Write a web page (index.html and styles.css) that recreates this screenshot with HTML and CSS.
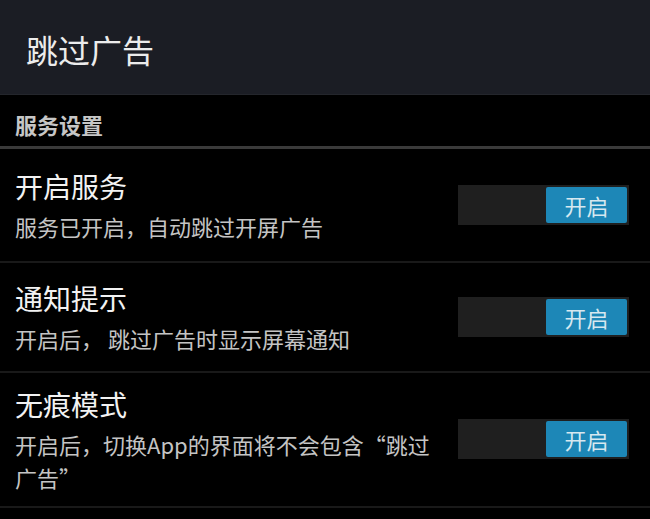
FILE: index.html
```html
<!DOCTYPE html>
<html lang="zh-CN">
<head>
    <meta charset="UTF-8">
    <meta name="viewport" content="width=device-width, initial-scale=1.0">
    <title>跳过广告</title>
    <link rel="stylesheet" href="styles.css">
</head>
<body>
    <div class="app">
        <div class="toolbar">
            <h1 class="toolbar-title">跳过广告</h1>
        </div>

        <div class="section-title">服务设置</div>

        <div class="pref-row pref-row-first">
            <div class="pref-text">
                <div class="pref-title">开启服务</div>
                <div class="pref-summary">服务已开启，自动跳过开屏广告</div>
            </div>
            <div class="switch">
                <span class="switch-thumb">开启</span>
            </div>
        </div>

        <div class="pref-row">
            <div class="pref-text">
                <div class="pref-title">通知提示</div>
                <div class="pref-summary">开启后， 跳过广告时显示屏幕通知</div>
            </div>
            <div class="switch">
                <span class="switch-thumb">开启</span>
            </div>
        </div>

        <div class="pref-row">
            <div class="pref-text">
                <div class="pref-title">无痕模式</div>
                <div class="pref-summary">开启后，切换App的界面将不会包含“跳过广告”</div>
            </div>
            <div class="switch">
                <span class="switch-thumb">开启</span>
            </div>
        </div>
    </div>
</body>
</html>
```

FILE: styles.css
```css
body {
    margin: 0;
    background-color: #000;
    font-family: "Noto Sans CJK SC", "Noto Sans", sans-serif;
    color: #eee;
}

.app {
    width: 650px;
    min-height: 519px;
    background-color: #000;
}

.toolbar {
    height: 95px;
    background-color: #1b1d24;
    border-bottom: 1px solid #24262c;
    display: flex;
    align-items: center;
    padding-left: 26px;
    box-sizing: border-box;
}

.toolbar-title {
    margin: 0;
    font-size: 32px;
    font-weight: normal;
    color: #ececec;
    line-height: 40px;
    padding-top: 4px;
}

.section-title {
    padding: 12px 15px 5px;
    font-size: 22px;
    line-height: 34px;
    font-weight: bold;
    color: #c6c6c6;
    border-bottom: 3px solid #3a3a3a;
}

.pref-row {
    display: flex;
    align-items: center;
    min-height: 110px;
    padding: 14px 21px 12px 15px;
    box-sizing: border-box;
    border-bottom: 2px solid #191919;
}

.pref-row-first {
    min-height: 114px;
}

.pref-text {
    flex: 1;
}

.pref-title {
    font-size: 28px;
    line-height: 34px;
    color: #f2f2f2;
}

.pref-summary {
    margin-top: 7px;
    font-size: 22px;
    line-height: 33px;
    color: #c4c4c4;
}

.switch {
    width: 171px;
    height: 40px;
    margin-left: 20px;
    margin-bottom: 3px;
    padding: 2px;
    box-sizing: border-box;
    background-color: #1f1f1f;
    display: flex;
    justify-content: flex-end;
    flex-shrink: 0;
}

.switch-thumb {
    width: 81px;
    height: 36px;
    border-radius: 2px;
    background-color: #1d87b7;
    color: #d6e8f0;
    font-size: 22px;
    line-height: 36px;
    text-align: center;
}
```
